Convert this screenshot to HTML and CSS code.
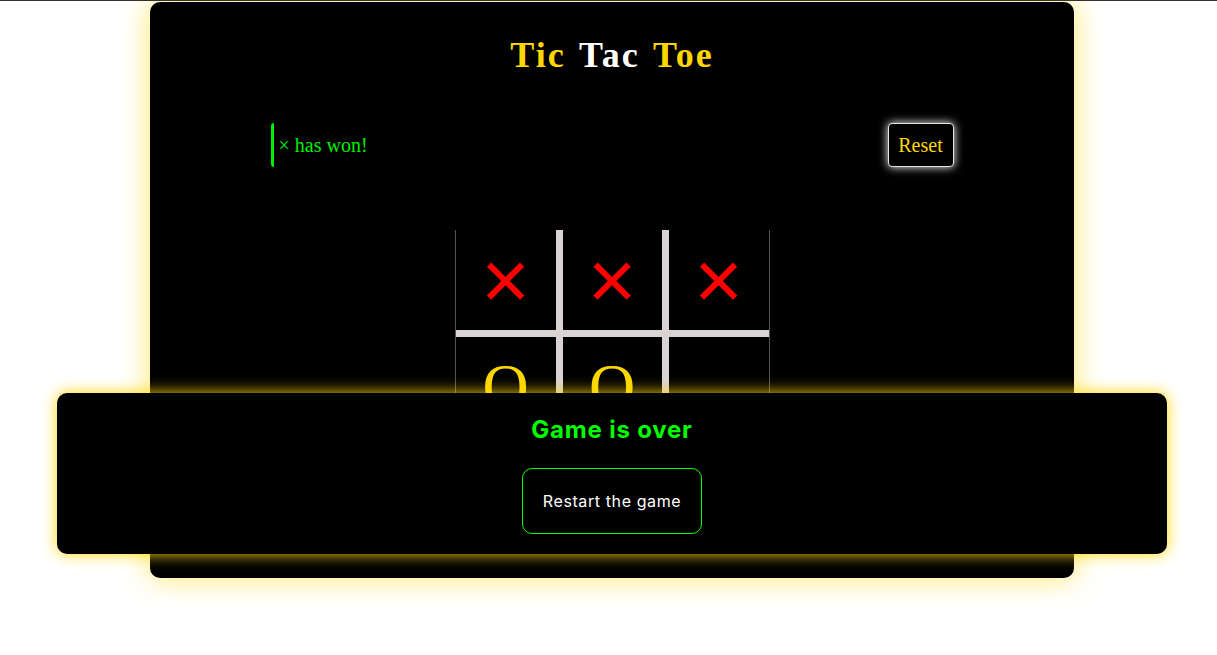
FILE: index.html
```html
<!DOCTYPE html>
<html lang="en">
<head>
<meta charset="utf-8">
<title>Tic Tac Toe</title>
<link rel="stylesheet" href="styles.css">
</head>
<body>
<main class="card">
  <h1 class="title"><span class="gold">Tic</span> <span class="white">Tac</span> <span class="gold">Toe</span></h1>
  <div class="status-row">
    <div class="status">× has won!</div>
    <button class="reset">Reset</button>
  </div>
  <div class="board">
    <div class="cell x">×</div>
    <div class="cell x">×</div>
    <div class="cell x">×</div>
    <div class="cell o">O</div>
    <div class="cell o">O</div>
    <div class="cell"></div>
    <div class="cell"></div>
    <div class="cell"></div>
    <div class="cell"></div>
  </div>
</main>
<div class="overlay">
  <h2 class="over-title">Game is over</h2>
  <button class="restart">Restart the game</button>
</div>
</body>
</html>
```

FILE: styles.css
```css
html, body {
  margin: 0;
  padding: 0;
}

body {
  background: #fff;
  border-top: 1px solid #333;
  min-height: 654px;
  box-sizing: border-box;
}

.card {
  width: 924px;
  height: 576px;
  margin: 1px 0 0 150px;
  background: #000;
  border-radius: 10px;
  box-shadow: 0 0 30px rgba(255, 215, 0, 0.6);
  padding-top: 33px;
  box-sizing: border-box;
}

.title {
  margin: 0;
  text-align: center;
  font: bold 36px/1.15 "Liberation Serif", serif;
  letter-spacing: 2px;
  word-spacing: 3px;
}

.gold { color: #ffd700; }
.white { color: #fff; }

.status-row {
  width: 683px;
  height: 44px;
  margin: 47px auto 0;
  display: flex;
  justify-content: space-between;
  align-items: center;
}

.status {
  height: 44px;
  box-sizing: border-box;
  border-left: 3px solid #00ee00;
  border-radius: 3px;
  padding-left: 5px;
  display: flex;
  align-items: center;
  color: #00ee00;
  font: 20px "Liberation Serif", serif;
}

.reset {
  width: 66px;
  height: 44px;
  padding: 0;
  background: #000;
  border: 1px solid #e6e6e6;
  border-radius: 4px;
  box-shadow: 0 0 10px #fff;
  color: #ffd700;
  font: 20px "Liberation Serif", serif;
}

.board {
  width: fit-content;
  margin: 63px auto 0;
  display: grid;
  grid-template-columns: 100px 99px 100px;
  grid-template-rows: 100px 100px 100px;
  gap: 7px;
  background: #dad3d3;
  border-left: 1px solid #555;
  border-right: 1px solid #555;
}

.cell {
  background: #000;
  display: flex;
  align-items: center;
  justify-content: center;
  line-height: 1;
}

.cell.x {
  color: #ff0000;
  font: 84px "Liberation Sans", sans-serif;
}

.cell.o {
  color: #ffd700;
  font: 64px "Liberation Serif", serif;
}

.overlay {
  position: absolute;
  left: 57px;
  top: 393px;
  width: 1110px;
  height: 161px;
  box-sizing: border-box;
  padding-top: 23px;
  background: #000;
  border-radius: 10px;
  box-shadow: 0 0 15px #ffd700;
  display: flex;
  flex-direction: column;
  align-items: center;
}

.over-title {
  margin: 0;
  color: #00ff00;
  font: bold 24px/1.2 Inter, sans-serif;
  letter-spacing: 0.8px;
}

.restart {
  margin-top: 23px;
  padding: 20px;
  background: #000;
  border: 1px solid #00ff00;
  border-radius: 10px;
  color: #fff;
  font: 16px/24px Inter, sans-serif;
  letter-spacing: 0.6px;
}
```
